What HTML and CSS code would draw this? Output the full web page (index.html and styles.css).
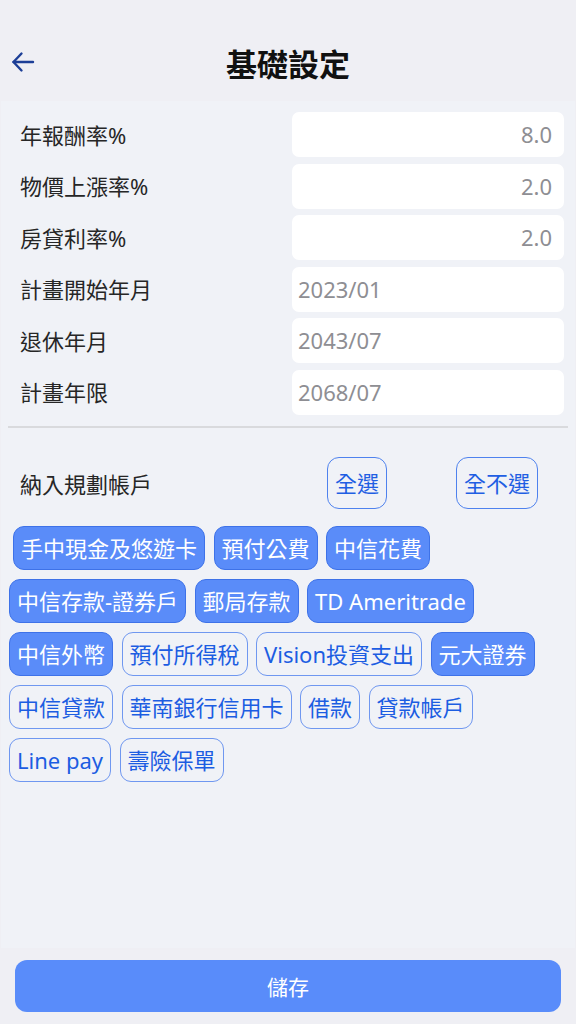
FILE: index.html
```html
<!DOCTYPE html>
<html lang="zh-Hant">

<head>
    <meta charset="UTF-8">
    <meta name="viewport" content="width=device-width, initial-scale=1.0">
    <title>基礎設定</title>
    <link rel="stylesheet" href="styles.css">
</head>

<body>
<header class="top-bar">
    <button class="back-btn" aria-label="返回">
        <svg width="24" height="24" viewBox="0 0 24 24" fill="none" stroke="#1d3f97" stroke-width="2.4" stroke-linecap="round" stroke-linejoin="round">
            <path d="M22 12H2.5"/>
            <path d="M10.5 3.5L2.5 12l8 8.5"/>
        </svg>
    </button>
    <h1>基礎設定</h1>
</header>

<main class="panel">
    <div class="field-list">
        <div class="field">
            <label>年報酬率%</label>
            <div class="value num">8.0</div>
        </div>
        <div class="field">
            <label>物價上漲率%</label>
            <div class="value num">2.0</div>
        </div>
        <div class="field">
            <label>房貸利率%</label>
            <div class="value num">2.0</div>
        </div>
        <div class="field">
            <label>計畫開始年月</label>
            <div class="value">2023/01</div>
        </div>
        <div class="field">
            <label>退休年月</label>
            <div class="value">2043/07</div>
        </div>
        <div class="field">
            <label>計畫年限</label>
            <div class="value">2068/07</div>
        </div>
    </div>

    <hr class="divider">

    <div class="account-head">
        <span class="account-title">納入規劃帳戶</span>
        <button class="select-btn">全選</button>
        <button class="select-btn">全不選</button>
    </div>

    <div class="chips">
        <span class="chip on first">手中現金及悠遊卡</span>
        <span class="chip on">預付公費</span>
        <span class="chip on">中信花費</span>
        <span class="chip on">中信存款-證券戶</span>
        <span class="chip on">郵局存款</span>
        <span class="chip on">TD Ameritrade</span>
        <span class="chip on">中信外幣</span>
        <span class="chip">預付所得稅</span>
        <span class="chip">Vision投資支出</span>
        <span class="chip on">元大證券</span>
        <span class="chip">中信貸款</span>
        <span class="chip">華南銀行信用卡</span>
        <span class="chip">借款</span>
        <span class="chip">貸款帳戶</span>
        <span class="chip">Line pay</span>
        <span class="chip">壽險保單</span>
    </div>
</main>

<footer class="bottom-bar">
    <button class="save-btn">儲存</button>
</footer>
</body>

</html>
```

FILE: styles.css
```css
* {
    padding: 0;
    margin: 0;
    box-sizing: border-box;
}

body {
    width: 576px;
    height: 1024px;
    background-color: #efeff4;
    font-family: "Noto Sans", "Noto Sans CJK TC", sans-serif;
    color: #222;
    display: flex;
    flex-direction: column;
}

button {
    font-family: inherit;
    cursor: pointer;
}

/* header */

.top-bar {
    height: 101px;
    position: relative;
    display: flex;
    align-items: flex-end;
    justify-content: center;
    padding-bottom: 15px;
}

.top-bar h1 {
    font-size: 31px;
    font-weight: 700;
    line-height: 44px;
    color: #111;
}

.back-btn {
    position: absolute;
    left: 11px;
    top: 50px;
    border: none;
    background: transparent;
    width: 24px;
    height: 24px;
}

/* settings panel */

.panel {
    flex: 1;
    margin: 0 1px;
    background-color: #f0f2f7;
    padding-top: 11px;
}

.field-list {
    display: flex;
    flex-direction: column;
    gap: 6.5px;
    padding-right: 11px;
}

.field {
    display: flex;
    align-items: center;
    height: 45px;
}

.field label {
    flex: 1;
    padding-left: 19px;
    font-size: 22px;
    line-height: 30px;
    color: #262626;
}

.value {
    width: 272px;
    height: 45px;
    background-color: #fff;
    border-radius: 7px;
    padding: 0 6px;
    font-size: 22px;
    line-height: 45px;
    color: #8e8e93;
}

.value.num {
    text-align: right;
    padding-right: 12px;
}

.divider {
    border: none;
    height: 2px;
    background-color: #d9dadd;
    margin: 11px 7px 0 7px;
}

.account-head {
    display: flex;
    align-items: center;
    margin-top: 29px;
    padding: 0 37px 0 19px;
}

.account-title {
    flex: 1;
    font-size: 22px;
    color: #262626;
}

.select-btn {
    height: 52px;
    padding: 0 7px;
    border: 1px solid #4f82ee;
    border-radius: 12px;
    background: transparent;
    color: #1f5fe3;
    font-size: 22px;
    line-height: 50px;
}

.select-btn + .select-btn {
    margin-left: 69px;
}

/* account chips */

.chips {
    display: flex;
    flex-wrap: wrap;
    gap: 9px 8.5px;
    padding: 0 8px;
    margin-top: 17px;
}

.chip {
    height: 44px;
    padding: 0 7px;
    border: 1px solid #6f97f0;
    border-radius: 11px;
    font-size: 22px;
    line-height: 42px;
    color: #1c5de2;
    white-space: nowrap;
}

.chip.on {
    background-color: #5a8cf9;
    border-color: #3e72e8;
    color: #fff;
}

.chip.first {
    margin-left: 4px;
}

/* footer */

.bottom-bar {
    padding: 12px 15px 12px 15px;
}

.save-btn {
    width: 546px;
    height: 52px;
    border: none;
    border-radius: 12px;
    background-color: #598cfa;
    color: #fff;
    font-size: 21px;
}
```
